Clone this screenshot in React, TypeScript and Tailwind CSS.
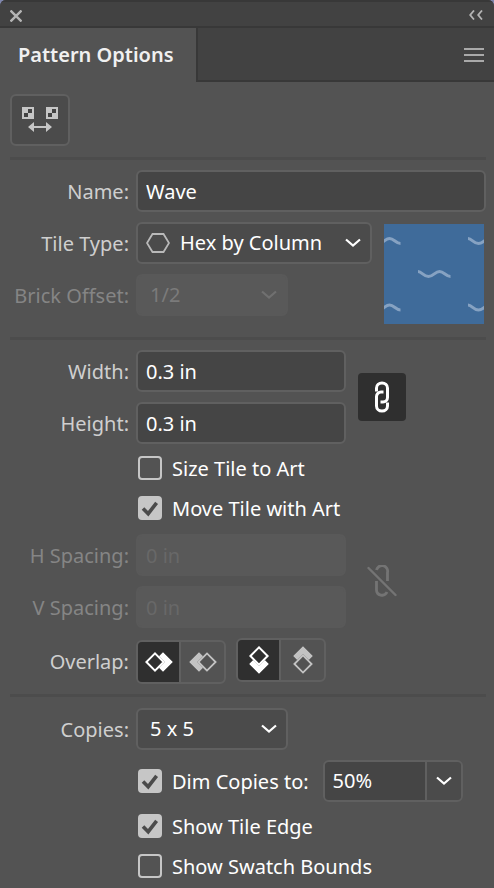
import { useState } from "react";
import type { ReactNode } from "react";

const labelBase = "w-[119px] shrink-0 whitespace-nowrap pt-0.5 text-right";
const fieldBase =
  "h-[42px] min-w-0 rounded-md border-2 border-[#606060] bg-[#454545] px-2 text-white outline-none disabled:border-[#595959] disabled:bg-[#595959] disabled:text-[#686868]";

function Row({ id, label, disabled, children }: { id: string; label: string; disabled?: boolean; children: ReactNode }) {
  return (
    <div className="flex items-center gap-[7px]">
      <label htmlFor={id} className={`${labelBase} ${disabled ? "text-[#858585]" : "text-[#cfcfcf]"}`}>
        {label}
      </label>
      {children}
    </div>
  );
}

function TextField({ id, label, value, disabled, wide }: { id: string; label: string; value: string; disabled?: boolean; wide?: boolean }) {
  return (
    <Row id={id} label={label} disabled={disabled}>
      <input id={id} type="text" defaultValue={value} disabled={disabled} className={`${fieldBase} ${wide ? "flex-1" : "w-[210px]"}`} />
    </Row>
  );
}

function Chevron() {
  return (
    <svg width="16" height="10" viewBox="0 0 16 10" fill="none" stroke="currentColor" strokeWidth="2.2" aria-hidden="true">
      <path d="M1 1.5 8 7.5 15 1.5" />
    </svg>
  );
}

function Picker({ id, options, disabled, icon }: { id: string; options: string[]; disabled?: boolean; icon?: ReactNode }) {
  return (
    <div className={`relative ${icon ? "w-[236px]" : "w-[152px]"} ${disabled ? "text-[#707070]" : "text-white"}`}>
      <select
        id={id}
        disabled={disabled}
        className={`h-[42px] w-full appearance-none rounded-md border-2 opacity-100 outline-none ${icon ? "pl-[42px]" : "pl-3"} ${
          disabled ? "border-[#595959] bg-[#595959] text-[#7b7b7b]" : "border-[#606060] bg-[#4b4b4b]"
        }`}
      >
        {options.map((o) => (
          <option key={o}>{o}</option>
        ))}
      </select>
      {icon && <span className="pointer-events-none absolute inset-y-0 left-2.5 flex items-center">{icon}</span>}
      <span className="pointer-events-none absolute inset-y-0 right-[11px] flex items-center">
        <Chevron />
      </span>
    </div>
  );
}

function Check({ label, checked }: { label: string; checked?: boolean }) {
  return (
    <label className="flex h-6 w-fit items-center gap-2.5 whitespace-nowrap text-white">
      <span className="relative h-6 w-6">
        <input
          type="checkbox"
          defaultChecked={checked}
          className="peer block h-6 w-6 appearance-none rounded border-2 border-[#c6c6c6] checked:bg-[#c6c6c6]"
        />
        <svg className="pointer-events-none absolute inset-0 hidden peer-checked:block" width="24" height="24" viewBox="0 0 24 24" fill="none" stroke="#4b4b4b" strokeWidth="3.6" aria-hidden="true">
          <path d="m5 12.5 5.2 5.2L18.6 6.8" />
        </svg>
      </span>
      <span className="pt-0.5">{label}</span>
    </label>
  );
}

function Diamonds({ flip, vertical }: { flip?: boolean; vertical?: boolean }) {
  const turn = vertical ? (flip ? -90 : 90) : flip ? 180 : 0;
  return (
    <svg width="28" height="28" viewBox="0 0 28 28" aria-hidden="true">
      <g transform={`rotate(${turn} 14 14)`}>
        <path d="M18 4.2 27.8 14 18 23.8 14 19.8 19.8 14 14 8.2Z" fill="currentColor" />
        <path d="M10 5.4 18.6 14 10 22.6 1.4 14Z" fill="none" stroke="currentColor" strokeWidth={flip ? 1.8 : 2} />
      </g>
    </svg>
  );
}

function OverlapToggle({ names, vertical }: { names: [string, string]; vertical?: boolean }) {
  const [active, setActive] = useState(0);
  return (
    <div className={`flex h-11 w-[90px] overflow-hidden rounded-md border-2 border-[#606060] ${vertical ? "self-start" : "self-end"}`}>
      {names.map((name, i) => (
        <button
          key={name}
          type="button"
          aria-label={name}
          aria-pressed={active === i}
          onClick={() => setActive(i)}
          className={`flex items-center justify-center ${i === 1 ? "flex-1 border-l-2 border-[#606060]" : "w-[41px]"} ${
            active === i ? "bg-[#2f2f2f] text-white" : "text-[#c2c2c2]"
          }`}
        >
          <Diamonds flip={i === 1} vertical={vertical} />
        </button>
      ))}
    </div>
  );
}

function Divider() {
  return <hr className="ml-2.5 mr-2 h-[3px] border-0 bg-[#4c4c4c]" />;
}

const waveOrigins = [
  [34, 47.5],
  [-16, 14.5],
  [84, 14.5],
  [-16, 81],
  [84, 81],
];

function Swatch() {
  return (
    <svg className="mt-0.5 shrink-0" width="100" height="100" viewBox="0 0 100 100" role="img" aria-label="Wave pattern preview">
      <rect width="100" height="100" fill="#3f6b9a" />
      <g fill="none" stroke="#86a2c2" strokeWidth="3">
        {waveOrigins.map(([x, y]) => (
          <path key={`${x} ${y}`} transform={`translate(${x} ${y})`} d="M0 0C4 0 5.500 5 10.500 5S17 0 21.500 0 28 5 32.500 5" />
        ))}
      </g>
    </svg>
  );
}

export default function App() {
  const [linked, setLinked] = useState(true);
  return (
    <div className="min-h-screen bg-[#7f86ad]">
      <main className="min-h-screen overflow-hidden rounded-t-md bg-[#535353] font-['Noto_Sans','Open_Sans',sans-serif] text-[20px] leading-6">
        <header className="flex h-7 items-center justify-between border-y-2 border-[#383838] bg-[#424242] pl-2.5 pr-[11px] text-[#b4b4b4]">
          <button type="button" aria-label="Close">
            <svg className="mt-1" width="12" height="12" viewBox="0 0 12 12" stroke="currentColor" strokeWidth="2.4" aria-hidden="true">
              <path d="m.5.5 11 11M11.500.5l-11 11" />
            </svg>
          </button>
          <button type="button" aria-label="Collapse">
            <svg className="mt-0.5" width="14" height="10" viewBox="0 0 14 10" fill="none" stroke="currentColor" strokeWidth="1.800" aria-hidden="true">
              <path d="M5 .5 1.200 5 5 9.500M13 .5 9.200 5 13 9.500" />
            </svg>
          </button>
        </header>

        <div className="flex h-[54px] items-stretch">
          <h1 className="w-[198px] border-r-2 border-[#383838] pl-[18px] pt-[15px] font-semibold whitespace-nowrap text-[#f0f0f0]">Pattern Options</h1>
          <div className="flex flex-1 items-center justify-end border-b-2 border-[#383838] bg-[#424242] pr-2.5 pt-0.5">
            <button type="button" aria-label="Panel menu" className="text-[#a9a9a9]">
              <svg width="20" height="14" viewBox="0 0 20 14" fill="currentColor" aria-hidden="true">
                <path d="M0 0h20v2H0zM0 6h20v2H0zM0 12h20v2H0z" />
              </svg>
            </button>
          </div>
        </div>

        <div className="px-2.5 pb-[11px] pt-3">
          <button type="button" aria-label="Pattern Tile Tool" className="flex h-[52px] w-[60px] items-center justify-center rounded-md border-2 border-[#606060] bg-[#4b4b4b]">
            <svg width="36" height="26" viewBox="0 0 36 26" aria-hidden="true">
              <path d="M0 0h12v12H0zM24 0h12v12H24z" fill="#c6c6c6" />
              <path d="M6 2h4v4H6zM2 6h4v4H2zM30 2h4v4h-4zM26 6h4v4h-4z" fill="#434343" />
              <path d="M6 20 12 15v4h12v-4l6 5-6 5v-4H12v4Z" fill="#c6c6c6" />
            </svg>
          </button>
        </div>

        <Divider />
        <section className="flex flex-col gap-2.5 pb-[13px] pl-2.5 pr-2 pt-2.5">
          <TextField id="name" label="Name:" value="Wave" wide />
          <div className="flex gap-3">
            <div className="flex flex-col gap-2.5">
              <Row id="tile-type" label="Tile Type:">
                <Picker
                  id="tile-type"
                  options={["Hex by Column", "Hex by Row", "Grid"]}
                  icon={
                    <svg width="24" height="20" viewBox="0 0 24 20" fill="none" stroke="#b9b9b9" strokeWidth="1.800" aria-hidden="true">
                      <path d="M6.500 1h11L23 10l-5.500 9h-11L1 10Z" />
                    </svg>
                  }
                />
              </Row>
              <Row id="brick-offset" label="Brick Offset:" disabled>
                <Picker id="brick-offset" options={["1/2"]} disabled />
              </Row>
            </div>
            <Swatch />
          </div>
        </section>

        <Divider />
        <section className="pb-2.5 pl-2.5 pr-2 pt-2.5">
          <div className="flex items-center gap-3">
            <div className="flex flex-col gap-2.5">
              <TextField id="width" label="Width:" value="0.3 in" />
              <TextField id="height" label="Height:" value="0.3 in" />
            </div>
            <button
              type="button"
              aria-label="Maintain width and height proportions"
              aria-pressed={linked}
              onClick={() => setLinked(!linked)}
              className={`flex h-12 w-12 items-center justify-center rounded text-white ${linked ? "bg-[#2f2f2f]" : ""}`}
            >
              <svg width="16" height="32" viewBox="0 0 16 32" fill="none" stroke="currentColor" strokeWidth="3" aria-hidden="true">
                <path d="M2.500 10.500V7a5.500 5 0 0 1 11 0v9.500a4.500 4.500 0 0 1-4.500 4.500H6.500" />
                <path d="M13.500 21.500V25a5.500 5 0 0 1-11 0v-9.500A4.500 4.500 0 0 1 7 11H9.500" />
              </svg>
            </button>
          </div>

          <div className="flex flex-col gap-4 pb-3.5 pl-32 pt-3">
            <Check label="Size Tile to Art" />
            <Check label="Move Tile with Art" checked />
          </div>

          <div className="flex items-center gap-3">
            <div className="flex flex-col gap-2.5">
              <TextField id="h-spacing" label="H Spacing:" value="0 in" disabled />
              <TextField id="v-spacing" label="V Spacing:" value="0 in" disabled />
            </div>
            <button type="button" disabled aria-label="Maintain spacing proportions" className="flex h-12 w-12 items-center justify-center text-[#747474]">
              <svg width="30" height="32" viewBox="0 0 30 32" fill="none" stroke="currentColor" strokeWidth="2.800" aria-hidden="true">
                <path d="M9.500 5A5.500 5.500 0 0 1 20.500 7.500V16" />
                <path d="M9.500 16v8.500A5.500 5.500 0 0 0 20 27" />
                <path d="m1.500 3 27 27" strokeLinecap="round" strokeWidth="2.400" />
              </svg>
            </button>
          </div>

          <div role="group" aria-labelledby="overlap" className="mt-2.5 flex h-[46px] items-center gap-[7px]">
            <span id="overlap" className={`${labelBase} text-[#cfcfcf]`}>
              Overlap:
            </span>
            <div className="flex h-full gap-2.5">
              <OverlapToggle names={["Left in front", "Right in front"]} />
              <OverlapToggle names={["Top in front", "Bottom in front"]} vertical />
            </div>
          </div>
        </section>

        <Divider />
        <section className="pb-2.5 pl-2.5 pr-2 pt-[11px]">
          <Row id="copies" label="Copies:">
            <Picker id="copies" options={["5 x 5", "3 x 3", "7 x 7"]} />
          </Row>
          <div className="flex flex-col pl-32 pt-2.5">
            <div className="flex items-center gap-3.5">
              <Check label="Dim Copies to:" checked />
              <div className="flex h-[42px] w-[140px] overflow-hidden rounded-md border-2 border-[#606060] text-white">
                <input type="text" aria-label="Dim amount" defaultValue="50%" className="w-0 min-w-0 flex-1 bg-[#454545] px-2 outline-none" />
                <button type="button" aria-label="Choose dim amount" className="flex w-9 items-center justify-center border-l-2 border-[#606060] bg-[#4b4b4b]">
                  <Chevron />
                </button>
              </div>
            </div>
            <div className="flex flex-col gap-4 pt-3">
              <Check label="Show Tile Edge" checked />
              <Check label="Show Swatch Bounds" />
            </div>
          </div>
        </section>
      </main>
    </div>
  );
}
